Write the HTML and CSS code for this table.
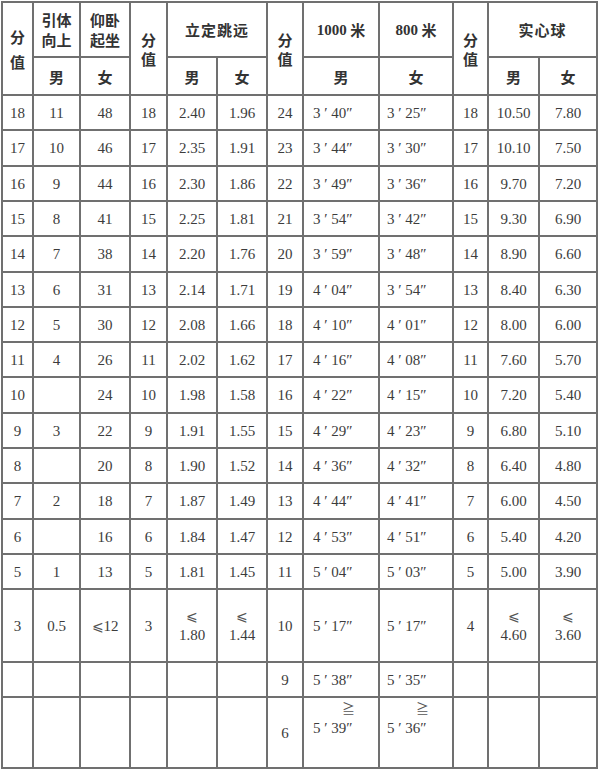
FILE: index.html
```html
<!DOCTYPE html>
<html lang="zh-CN">
<head>
<meta charset="utf-8">
<title>体育成绩评分表</title>
<link rel="stylesheet" href="styles.css">
</head>
<body>
<div class="sheet">
  <div class="c h score s1">分<br>值</div>
  <div class="c h two">引体<br>向上</div>
  <div class="c h two">仰卧<br>起坐</div>
  <div class="c h score">分<br>值</div>
  <div class="c h wide">立定跳远</div>
  <div class="c h score">分<br>值</div>
  <div class="c h run"><span class="num">1000</span>&nbsp;米</div>
  <div class="c h run"><span class="num">800</span>&nbsp;米</div>
  <div class="c h score">分<br>值</div>
  <div class="c h wide">实心球</div>
  <div class="c h sex">男</div><div class="c h sex">女</div>
  <div class="c h sex">男</div><div class="c h sex">女</div>
  <div class="c h sex">男</div><div class="c h sex">女</div>
  <div class="c h sex">男</div><div class="c h sex">女</div>

  <div class="c">18</div><div class="c">11</div><div class="c">48</div><div class="c">18</div><div class="c">2.40</div><div class="c">1.96</div><div class="c">24</div><div class="c t1">3 ′ 40″</div><div class="c t2">3 ′ 25″</div><div class="c">18</div><div class="c">10.50</div><div class="c">7.80</div>
  <div class="c">17</div><div class="c">10</div><div class="c">46</div><div class="c">17</div><div class="c">2.35</div><div class="c">1.91</div><div class="c">23</div><div class="c t1">3 ′ 44″</div><div class="c t2">3 ′ 30″</div><div class="c">17</div><div class="c">10.10</div><div class="c">7.50</div>
  <div class="c">16</div><div class="c">9</div><div class="c">44</div><div class="c">16</div><div class="c">2.30</div><div class="c">1.86</div><div class="c">22</div><div class="c t1">3 ′ 49″</div><div class="c t2">3 ′ 36″</div><div class="c">16</div><div class="c">9.70</div><div class="c">7.20</div>
  <div class="c">15</div><div class="c">8</div><div class="c">41</div><div class="c">15</div><div class="c">2.25</div><div class="c">1.81</div><div class="c">21</div><div class="c t1">3 ′ 54″</div><div class="c t2">3 ′ 42″</div><div class="c">15</div><div class="c">9.30</div><div class="c">6.90</div>
  <div class="c">14</div><div class="c">7</div><div class="c">38</div><div class="c">14</div><div class="c">2.20</div><div class="c">1.76</div><div class="c">20</div><div class="c t1">3 ′ 59″</div><div class="c t2">3 ′ 48″</div><div class="c">14</div><div class="c">8.90</div><div class="c">6.60</div>
  <div class="c">13</div><div class="c">6</div><div class="c">31</div><div class="c">13</div><div class="c">2.14</div><div class="c">1.71</div><div class="c">19</div><div class="c t1">4 ′ 04″</div><div class="c t2">3 ′ 54″</div><div class="c">13</div><div class="c">8.40</div><div class="c">6.30</div>
  <div class="c">12</div><div class="c">5</div><div class="c">30</div><div class="c">12</div><div class="c">2.08</div><div class="c">1.66</div><div class="c">18</div><div class="c t1">4 ′ 10″</div><div class="c t2">4 ′ 01″</div><div class="c">12</div><div class="c">8.00</div><div class="c">6.00</div>
  <div class="c">11</div><div class="c">4</div><div class="c">26</div><div class="c">11</div><div class="c">2.02</div><div class="c">1.62</div><div class="c">17</div><div class="c t1">4 ′ 16″</div><div class="c t2">4 ′ 08″</div><div class="c">11</div><div class="c">7.60</div><div class="c">5.70</div>
  <div class="c">10</div><div class="c"></div><div class="c">24</div><div class="c">10</div><div class="c">1.98</div><div class="c">1.58</div><div class="c">16</div><div class="c t1">4 ′ 22″</div><div class="c t2">4 ′ 15″</div><div class="c">10</div><div class="c">7.20</div><div class="c">5.40</div>
  <div class="c">9</div><div class="c">3</div><div class="c">22</div><div class="c">9</div><div class="c">1.91</div><div class="c">1.55</div><div class="c">15</div><div class="c t1">4 ′ 29″</div><div class="c t2">4 ′ 23″</div><div class="c">9</div><div class="c">6.80</div><div class="c">5.10</div>
  <div class="c">8</div><div class="c"></div><div class="c">20</div><div class="c">8</div><div class="c">1.90</div><div class="c">1.52</div><div class="c">14</div><div class="c t1">4 ′ 36″</div><div class="c t2">4 ′ 32″</div><div class="c">8</div><div class="c">6.40</div><div class="c">4.80</div>
  <div class="c">7</div><div class="c">2</div><div class="c">18</div><div class="c">7</div><div class="c">1.87</div><div class="c">1.49</div><div class="c">13</div><div class="c t1">4 ′ 44″</div><div class="c t2">4 ′ 41″</div><div class="c">7</div><div class="c">6.00</div><div class="c">4.50</div>
  <div class="c">6</div><div class="c"></div><div class="c">16</div><div class="c">6</div><div class="c">1.84</div><div class="c">1.47</div><div class="c">12</div><div class="c t1">4 ′ 53″</div><div class="c t2">4 ′ 51″</div><div class="c">6</div><div class="c">5.40</div><div class="c">4.20</div>
  <div class="c">5</div><div class="c">1</div><div class="c">13</div><div class="c">5</div><div class="c">1.81</div><div class="c">1.45</div><div class="c">11</div><div class="c t1">5 ′ 04″</div><div class="c t2">5 ′ 03″</div><div class="c">5</div><div class="c">5.00</div><div class="c">3.90</div>

  <div class="c">3</div><div class="c">0.5</div><div class="c"><span class="sym">⩽</span>12</div><div class="c">3</div>
  <div class="c stack"><span class="sym">⩽</span><span>1.80</span></div>
  <div class="c stack"><span class="sym">⩽</span><span>1.44</span></div>
  <div class="c">10</div><div class="c t1">5 ′ 17″</div><div class="c t2">5 ′ 17″</div><div class="c">4</div>
  <div class="c stack"><span class="sym">⩽</span><span>4.60</span></div>
  <div class="c stack"><span class="sym">⩽</span><span>3.60</span></div>

  <div class="c"></div><div class="c"></div><div class="c"></div><div class="c"></div><div class="c"></div><div class="c"></div>
  <div class="c">9</div><div class="c t1">5 ′ 38″</div><div class="c t2">5 ′ 35″</div><div class="c"></div><div class="c"></div><div class="c"></div>

  <div class="c"></div><div class="c"></div><div class="c"></div><div class="c"></div><div class="c"></div><div class="c"></div>
  <div class="c">6</div>
  <div class="c t1 tstack"><span class="sym ge">≧</span><span>5 ′ 39″</span></div>
  <div class="c t2 tstack"><span class="sym ge">≧</span><span>5 ′ 36″</span></div>
  <div class="c"></div><div class="c"></div><div class="c"></div>
</div>
</body>
</html>
```
FILE: styles.css
```css
html, body {
  margin: 0;
  padding: 0;
  background: #ffffff;
}

.sheet {
  display: grid;
  grid-template-columns: 31px 47px 50px 37px 50px 50px 36px 76px 74px 35px 51px 58px;
  grid-template-rows: 55px 38px 35px 36px 35px 35px 36px 35px 35px 35px 36px 35px 35px 36px 35px 35px 73px 35px 71px;
  width: max-content;
  margin: 1px 0 0 1px;
  border-top: 2px solid #707070;
  border-left: 2px solid #707070;
  font-family: "Liberation Serif", "Noto Serif CJK SC", "Noto Sans CJK SC", serif;
  font-size: 15px;
  color: #3c3c3c;
}

.c {
  box-sizing: border-box;
  border-right: 2px solid #707070;
  border-bottom: 2px solid #707070;
  display: flex;
  align-items: center;
  justify-content: center;
  text-align: center;
  white-space: nowrap;
  line-height: 18px;
}

.h {
  font-family: "Noto Sans CJK SC", sans-serif;
  font-weight: 700;
  font-size: 15px;
  color: #333333;
  line-height: 20px;
}

.score {
  grid-row: span 2;
  line-height: 19px;
}

.s1 {
  line-height: 25px;
}

.wide {
  grid-column: span 2;
  letter-spacing: 1px;
}

.run .num {
  font-family: "Liberation Serif", serif;
  font-weight: 700;
  font-size: 15px;
}

.sex {
  padding-top: 1px;
}

.t1 {
  justify-content: flex-start;
  padding-left: 9px;
}

.t2 {
  justify-content: flex-start;
  padding-left: 7px;
}

.stack {
  flex-direction: column;
  line-height: 19px;
}

.tstack {
  flex-direction: column;
  align-items: flex-start;
  line-height: 20px;
}

.sym {
  font-family: "DejaVu Serif", "Noto Sans CJK SC", serif;
  font-size: 14px;
  color: #555555;
}

.ge {
  align-self: stretch;
  text-align: center;
  padding-left: 6px;
  font-family: "Noto Sans CJK SC", sans-serif;
  font-size: 13px;
}
```
